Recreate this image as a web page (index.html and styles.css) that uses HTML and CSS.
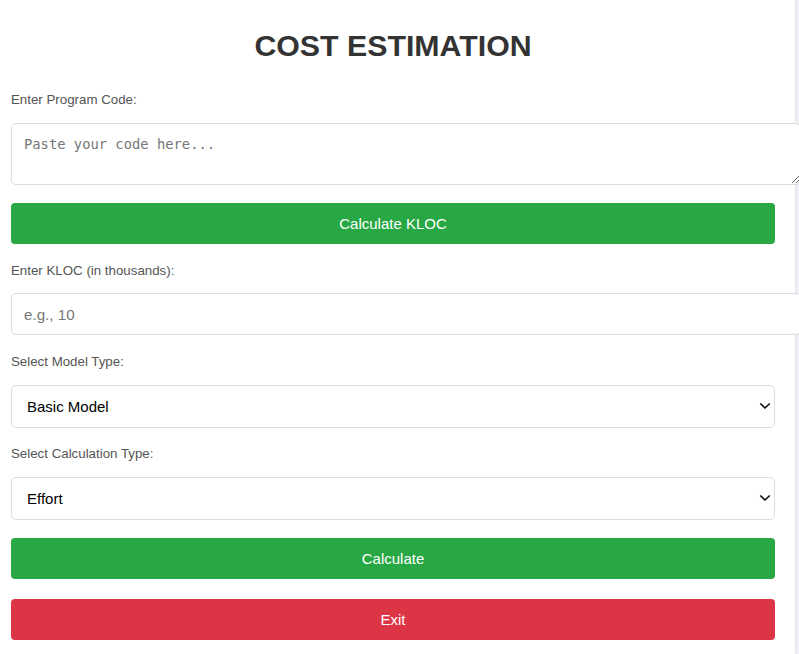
FILE: index.html
```
<!DOCTYPE html>
<html lang="en">
<head>
<meta charset="utf-8">
<title>Cost Estimation</title>
<link rel="stylesheet" href="styles.css">
</head>
<body>
<main class="card">
  <h1 class="title">COST ESTIMATION</h1>

  <label class="label label-first" for="code">Enter Program Code:</label>
  <textarea id="code" class="code-area" placeholder="Paste your code here..."></textarea>
  <button class="btn btn-green btn-kloc" type="button">Calculate KLOC</button>

  <label class="label" for="kloc">Enter KLOC (in thousands):</label>
  <input id="kloc" class="text-input" type="text" placeholder="e.g., 10">

  <label class="label label-model" for="model">Select Model Type:</label>
  <div class="select-wrap">
    <select id="model" class="select">
      <option>Basic Model</option>
      <option>Intermediate Model</option>
      <option>Detailed Model</option>
    </select>
    <svg class="chevron" width="12" height="8" viewBox="0 0 12 8"><path d="M1.8 2 L6 6 L10.2 2" fill="none" stroke="#111" stroke-width="1.7" stroke-linecap="round" stroke-linejoin="round"/></svg>
  </div>

  <label class="label label-calc" for="calc">Select Calculation Type:</label>
  <div class="select-wrap">
    <select id="calc" class="select">
      <option>Effort</option>
      <option>Time</option>
      <option>Cost</option>
    </select>
    <svg class="chevron" width="12" height="8" viewBox="0 0 12 8"><path d="M1.8 2 L6 6 L10.2 2" fill="none" stroke="#111" stroke-width="1.7" stroke-linecap="round" stroke-linejoin="round"/></svg>
  </div>

  <button class="btn btn-green btn-calc" type="button">Calculate</button>
  <button class="btn btn-red btn-exit" type="button">Exit</button>
</main>
</body>
</html>
```

FILE: styles.css
```
html, body {
  margin: 0;
  padding: 0;
  overflow: hidden;
}

body {
  background: #f0f1f6;
  font-family: "Liberation Sans", Arial, sans-serif;
  height: 654px;
}

.card {
  display: flex;
  flex-direction: column;
  width: 764px;
  min-height: 654px;
  padding: 0 20px 0 11px;
  background: #ffffff;
  box-shadow: 1px 0 2px rgba(0, 0, 0, 0.06);
}

.title {
  margin: 28px 0 0;
  font-size: 30.3px;
  line-height: 36px;
  font-weight: bold;
  color: #333333;
  text-align: center;
}

.label {
  display: block;
  margin-top: 19px;
  font-size: 13.3px;
  line-height: 16px;
  color: #555555;
}

.label-first {
  margin-top: 28px;
}

.label-calc {
  margin-top: 18px;
}

.code-area {
  display: block;
  margin-top: 15px;
  width: 764px;
  height: 36px;
  padding: 12px;
  border: 1px solid #dddddd;
  border-radius: 5px;
  font-family: "DejaVu Sans Mono", "Liberation Mono", monospace;
  font-size: 13.8px;
  line-height: 17px;
  color: #333;
  background: #fff;
  resize: both;
}

.code-area::placeholder {
  color: #777777;
}

.text-input {
  display: block;
  margin-top: 14px;
  width: 764px;
  height: 40px;
  padding: 0 12px;
  border: 1px solid #dddddd;
  border-radius: 5px;
  font-family: "Liberation Sans", Arial, sans-serif;
  font-size: 15.2px;
  color: #333;
  background: #fff;
}

.text-input::placeholder {
  color: #777777;
}

.select-wrap {
  position: relative;
  margin-top: 15px;
}

.select {
  display: block;
  appearance: none;
  -webkit-appearance: none;
  width: 100%;
  height: 43px;
  padding: 0 30px 0 15px;
  border: 1px solid #dddddd;
  border-radius: 5px;
  background: #ffffff;
  font-family: "Liberation Sans", Arial, sans-serif;
  font-size: 15px;
  color: #000000;
}

.chevron {
  position: absolute;
  right: 4px;
  top: 17px;
  pointer-events: none;
}

.btn {
  display: block;
  width: 100%;
  height: 41px;
  border: none;
  border-radius: 4px;
  font-family: "Liberation Sans", Arial, sans-serif;
  font-size: 15px;
  color: #ffffff;
  cursor: pointer;
}

.btn-green {
  background: #28a745;
}

.btn-red {
  background: #dc3545;
}

.btn-kloc {
  margin-top: 18px;
}

.btn-calc {
  margin-top: 18px;
}

.btn-exit {
  margin-top: 20px;
}
```
